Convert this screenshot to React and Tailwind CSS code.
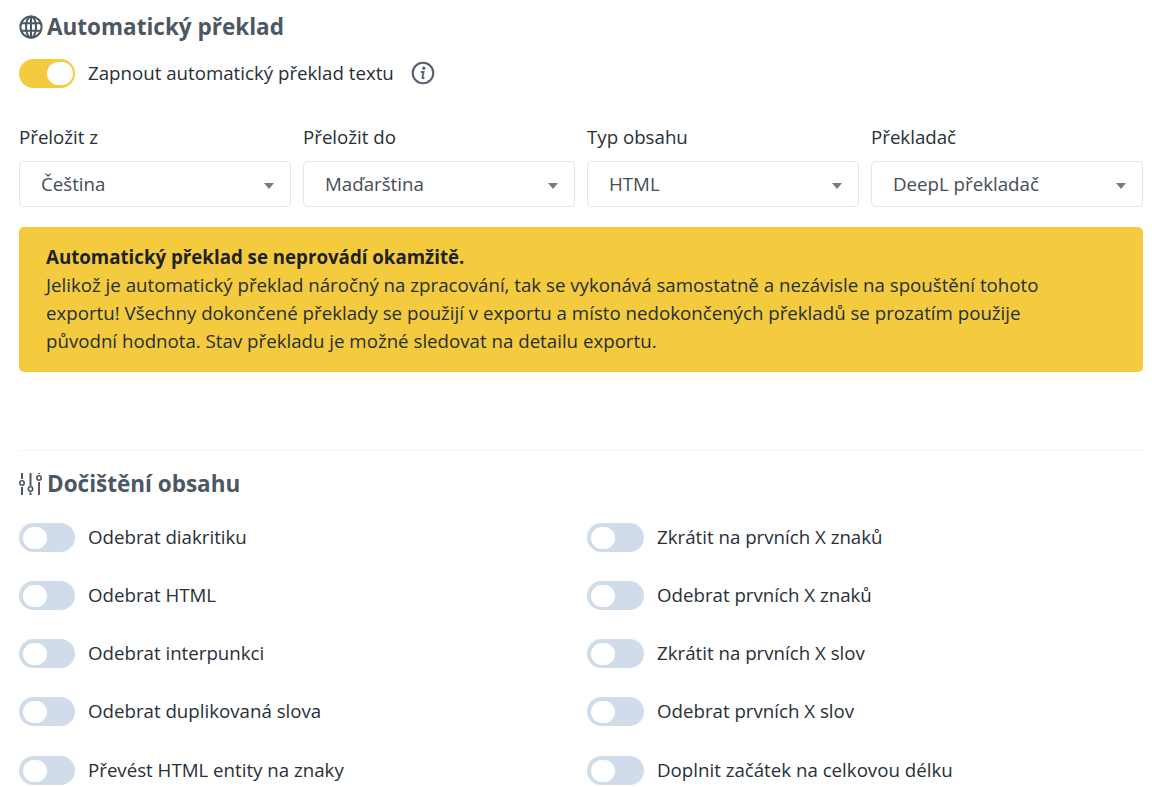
const Toggle = ({ on, wide }) => (
  <div className={`flex h-[29px] shrink-0 items-center rounded-full ${wide ? 'w-[57px]' : 'w-[56px]'} ${on ? 'justify-end bg-[#f4cb3f] pr-[2px]' : 'justify-start bg-[#d0dcea] pl-[4px]'}`}>
    <div className={`rounded-full bg-white ${on ? 'h-[23px] w-[26px]' : 'h-[22px] w-[24px]'}`} />
  </div>
);

const GlobeIcon = () => (
  <svg width="24" height="24" viewBox="0 0 24 24" fill="none" stroke="#4b5763" strokeWidth="2" className="shrink-0">
    <circle cx="12" cy="12" r="10.6" />
    <ellipse cx="12" cy="12" rx="5" ry="10.6" />
    <path d="M12 1.4v21.2M2.2 8.2h19.6M2.2 15.8h19.6" />
  </svg>
);

const SlidersIcon = () => (
  <svg width="23" height="24" viewBox="0 0 23 24" fill="none" strokeWidth="2" className="shrink-0">
    <g stroke="#4b5763">
      <path d="M3 1v6M3 15v8M11.5 1v13M11.5 20.5V23M20 1v1" />
      <circle cx="3" cy="11" r="2.2" strokeWidth="1.6" />
      <circle cx="11.5" cy="17" r="2.2" strokeWidth="1.6" />
      <circle cx="20" cy="6" r="2.2" strokeWidth="1.6" />
    </g>
    <path d="M20 10v13" stroke="#6b5358" />
  </svg>
);

const InfoIcon = () => (
  <svg width="24" height="24" viewBox="0 0 24 24" fill="none" stroke="#56616d" strokeWidth="2.1" className="shrink-0">
    <circle cx="12" cy="12" r="10.3" />
    <circle cx="12.8" cy="7.2" r="1.6" fill="#56616d" stroke="none" />
    <path d="M9.8 11h2.7l-1.1 5.6c-.1.6.5.8 2 .3" strokeWidth="1.9" />
  </svg>
);

const Select = ({ label, value }) => (
  <div>
    <div className="mb-[12px] h-[24px] text-[18.7px] leading-[24px] text-[#272f38]">{label}</div>
    <div className="flex h-[46px] items-center justify-between rounded-[5px] border border-[#e1e5ee] bg-white pl-[21px] pr-[5px] text-[18.7px] text-[#444c55]">
      <span>{value}</span>
      <span className="mr-[11px] mt-[4px] h-0 w-0 border-x-[5px] border-t-[6px] border-x-transparent border-t-[#7b7b7b]" />
    </div>
  </div>
);

const left = ['Odebrat diakritiku', 'Odebrat HTML', 'Odebrat interpunkci', 'Odebrat duplikovaná slova', 'Převést HTML entity na znaky'];
const right = ['Zkrátit na prvních X znaků', 'Odebrat prvních X znaků', 'Zkrátit na prvních X slov', 'Odebrat prvních X slov', 'Doplnit začátek na celkovou délku'];

const ToggleRow = ({ label, wide, last }) => (
  <div className={`flex h-[29px] items-center gap-[13px] text-[18.7px] text-[#272f38] ${last ? 'mt-[1px]' : ''}`}>
    <Toggle wide={wide} />
    <span>{label}</span>
  </div>
);

export default function App() {
  return (
    <div className="h-[787px] overflow-hidden bg-white pl-[19px] pr-[9px] pt-[12px] font-['Open_Sans',sans-serif]">
      <div className="flex h-[30px] items-center gap-[4px] text-[22.5px] font-bold text-[#4b5763]">
        <GlobeIcon />
        <h2>Automatický překlad</h2>
      </div>

      <div className="mt-[16px] flex h-[30px] items-center text-[18.7px] text-[#272f38]">
        <Toggle on />
        <span className="ml-[13px]">Zapnout automatický překlad textu</span>
        <span className="ml-[17px]"><InfoIcon /></span>
      </div>

      <div className="mt-[37px] grid grid-cols-4 gap-[12px]">
        <Select label="Přeložit z" value="Čeština" />
        <Select label="Přeložit do" value="Maďarština" />
        <Select label="Typ obsahu" value="HTML" />
        <Select label="Překladač" value="DeepL překladač" />
      </div>

      <div className="mt-[20px] h-[145px] rounded-[5px] bg-[#f4cb3f] px-[27px] pt-[16px] text-[18.7px] leading-[28px] text-[#272f38]">
        <div className="font-bold text-[#1d2228]">Automatický překlad se neprovádí okamžitě.</div>
        <p className="w-[1000px]">
          Jelikož je automatický překlad náročný na zpracování, tak se vykonává samostatně a nezávisle na spouštění tohoto exportu! Všechny dokončené překlady se použijí v exportu a místo nedokončených překladů se prozatím použije původní hodnota. Stav překladu je možné sledovat na detailu exportu.
        </p>
      </div>

      <div className="mt-[78px] border-t border-[#f3f4f6]" />

      <div className="mt-[18px] flex h-[30px] items-center gap-[5px] text-[22.5px] font-bold text-[#4b5763]">
        <SlidersIcon />
        <h2>Dočištění obsahu</h2>
      </div>

      <div className="mt-[24px] grid grid-cols-2 gap-x-[12px] gap-y-[29px]">
        {left.map((label, i) => (
          <div key={label} className="contents">
            <ToggleRow label={label} last={i === 4} />
            <ToggleRow label={right[i]} wide last={i === 4} />
          </div>
        ))}
      </div>
    </div>
  );
}
